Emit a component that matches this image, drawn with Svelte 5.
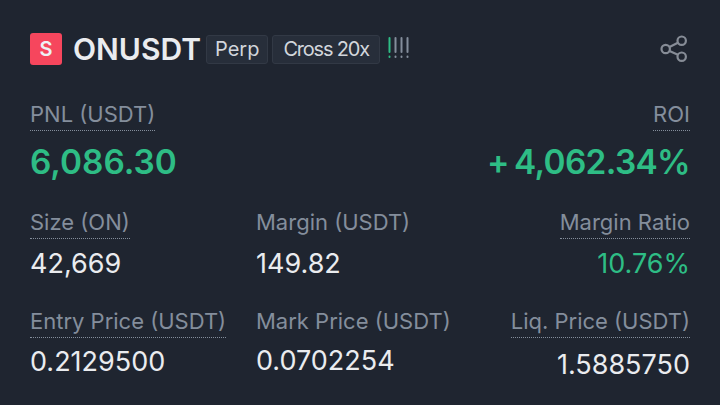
<script>
  const rows = [
    [
      { label: 'Size (ON)', value: '42,669', dotted: true },
      { label: 'Margin (USDT)', value: '149.82' },
      { label: 'Margin Ratio', value: '10.76%', dotted: true, right: true, green: true }
    ],
    [
      { label: 'Entry Price (USDT)', value: '0.2129500', dotted: true },
      { label: 'Mark Price (USDT)', value: '0.0702254', mark: true },
      { label: 'Liq. Price (USDT)', value: '1.5885750', dotted: true, right: true, low: true }
    ]
  ];
  const bars = [0, 6, 12, 18];
</script>

<main class="card">
  <header class="head">
    <span class="side">S</span>
    <h1 class="symbol">ONUSDT</h1>
    <span class="tag">Perp</span>
    <span class="tag tight">Cross 20x</span>
    <svg class="bars" width="22" height="22" viewBox="0 0 22 22" aria-label="Risk level">
      {#each bars as x, i}
        <g fill={i === 0 ? '#2ebd85' : '#848e9c'}>
          <rect x={x + 0.5} y="0" width="2" height="16" rx="1" />
          <rect x={x + 0.5} y="18.5" width="2" height="2.5" rx="1" />
        </g>
      {/each}
    </svg>
    <svg class="share" width="30" height="30" viewBox="0 0 30 30" fill="none" stroke="#868c96" stroke-width="2.2">
      <circle cx="5.7" cy="15" r="4.2" />
      <circle cx="21.7" cy="6.7" r="4.2" />
      <circle cx="21.7" cy="22.7" r="4.2" />
      <path d="M9.5 13 17.9 8.7M9.5 17 17.9 20.7" />
    </svg>
  </header>

  <section class="pnl">
    <div class="col">
      <span class="label dotted">PNL (USDT)</span>
      <span class="big">6,086.30</span>
    </div>
    <div class="col end">
      <span class="label dotted">ROI</span>
      <span class="big roi">+ 4,062.34%</span>
    </div>
  </section>

  {#each rows as row, r}
    <section class="row" class:second={r === 1}>
      {#each row as c}
        <div class="col" class:end={c.right}>
          <span class="label" class:dotted={c.dotted}>{c.label}</span>
          <span class="value" class:green={c.green} class:low={c.low} class:mark={c.mark}>{c.value}</span>
        </div>
      {/each}
    </section>
  {/each}
</main>

<style>
  :global(body) {
    margin: 0;
    background: #1f2530;
  }
  .card {
    box-sizing: border-box;
    width: 720px;
    height: 405px;
    padding: 30px 30px 0;
    background: #1f2530;
    font-family: Inter, "Open Sans", sans-serif;
    overflow: hidden;
  }
  .head {
    display: flex;
    align-items: center;
    height: 38px;
  }
  .side {
    display: flex;
    align-items: center;
    justify-content: center;
    width: 32px;
    height: 32px;
    margin-right: 11px;
    border-radius: 3px;
    background: #f6465d;
    color: #eef1f5;
    font-size: 20px;
    font-weight: 600;
  }
  .symbol {
    margin: 0 5px 0 0;
    color: #eaecef;
    font-size: 30px;
    font-weight: 600;
    line-height: 38px;
  }
  .tag {
    display: flex;
    align-items: center;
    height: 27px;
    margin-right: 4px;
    padding: 0 8px;
    border: 1px solid #323945;
    border-radius: 3px;
    background: #272e3a;
    color: #d2d6dc;
    font-size: 20px;
    line-height: 1;
  }
  .tight {
    padding: 0 10px;
    letter-spacing: -1.2px;
  }
  .bars {
    margin: -2px 0 0 4px;
  }
  .share {
    margin: 0 0 0 auto;
  }
  .pnl {
    display: flex;
    justify-content: space-between;
    margin-top: 34px;
  }
  .col {
    display: flex;
    flex-direction: column;
    align-items: flex-start;
  }
  .end {
    align-items: flex-end;
  }
  .label {
    padding-bottom: 3px;
    border-bottom: 1px solid transparent;
    color: #848e9c;
    font-size: 22px;
    line-height: 25px;
  }
  .dotted {
    border-bottom: 1px dotted #848e9c;
  }
  .big {
    margin-top: 10px;
    color: #2ebd85;
    font-size: 33.4px;
    font-weight: 600;
    line-height: 42px;
  }
  .roi {
    letter-spacing: -0.65px;
    word-spacing: -2.5px;
  }
  .row {
    display: grid;
    grid-template-columns: 226px 1fr auto;
    margin-top: 27px;
  }
  .value {
    margin-top: 7px;
    color: #eaecef;
    font-size: 27px;
    line-height: 36px;
  }
  .green {
    color: #2ebd85;
  }
  .second .value {
    margin-top: 6px;
  }
  .second .low {
    margin-top: 9px;
  }
  .second .mark {
    margin-top: 5px;
  }
</style>
